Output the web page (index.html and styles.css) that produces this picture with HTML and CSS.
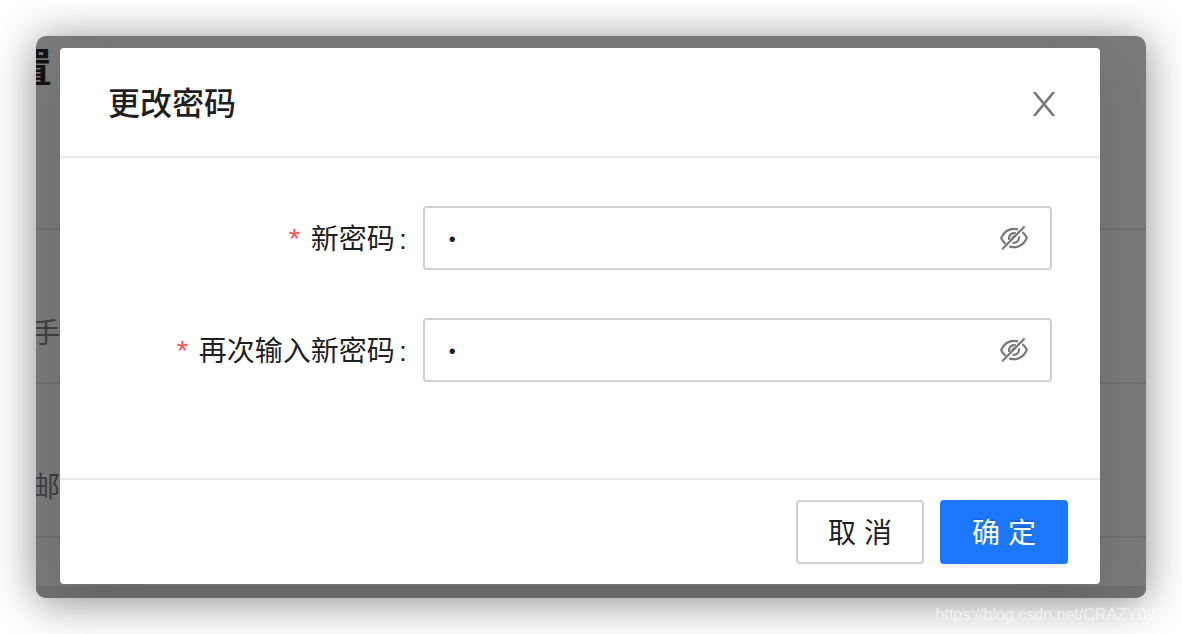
FILE: index.html
```
<!DOCTYPE html>
<html lang="zh-CN">
  <head>
    <meta charset="utf-8">
    <title>更改密码</title>
    <link rel="stylesheet" href="styles.css">
  </head>
  <body>
    <div class="window">
      <!-- Settings page behind the mask -->
      <div class="page">
        <div class="page-title">置</div>
        <div class="page-row">手</div>
        <div class="page-row">邮</div>
        <div class="page-rest"></div>
        <div class="page-footer"></div>
      </div>

      <form class="modal" role="dialog" aria-labelledby="modalTitle">
        <div class="modal-header">
          <h2 id="modalTitle" class="modal-title">更改密码</h2>
          <button type="button" class="close" aria-label="关闭">
            <svg width="24" height="24" viewBox="0 0 24 24" fill="currentColor">
              <path d="M0.5 0H3.8L12 9.8L20.2 0H23.5L13.7 12L23.5 24H20.2L12 14.2L3.8 24H0.5L10.3 12Z"/>
            </svg>
          </button>
        </div>

        <div class="modal-body">
          <div class="form-item">
            <label class="form-label" for="password">新密码</label>
            <div class="input-box">
              <input type="password" id="password" value="1" required>
              <button type="button" class="eye" aria-label="显示密码">
                <svg width="28" height="28" viewBox="0 0 28 28" fill="none" stroke="currentColor" stroke-width="2.2">
                  <path d="M18.2 5.5C16.9 5.1 15.5 4.8 14 4.8C8.5 4.8 4.1 7.9 1.4 13.4Q1.1 14 1.4 14.6C2.5 16.8 3.9 18.6 5.6 20"/>
                  <path d="M22.4 8C24.1 9.4 25.5 11.2 26.6 13.4Q26.9 14 26.6 14.6C23.9 20.1 19.5 23.2 14 23.2C12.3 23.2 10.7 22.9 9.3 22.4"/>
                  <path d="M15.8 9.3C12 8.2 8.7 11 9.1 14.8L9.4 16"/>
                  <path d="M18.7 12.4C19.8 16 16.5 19.7 12.5 18.7"/>
                  <path d="M14.4 12.7A1.7 1.7 0 0 0 12.7 14.4"/>
                  <path d="M2.2 25.3L24.6 2.4"/>
                </svg>
              </button>
            </div>
          </div>
          <div class="form-item">
            <label class="form-label" for="confirm">再次输入新密码</label>
            <div class="input-box">
              <input type="password" id="confirm" value="1" required>
              <button type="button" class="eye" aria-label="显示密码">
                <svg width="28" height="28" viewBox="0 0 28 28" fill="none" stroke="currentColor" stroke-width="2.2">
                  <path d="M18.2 5.5C16.9 5.1 15.5 4.8 14 4.8C8.5 4.8 4.1 7.9 1.4 13.4Q1.1 14 1.4 14.6C2.5 16.8 3.9 18.6 5.6 20"/>
                  <path d="M22.4 8C24.1 9.4 25.5 11.2 26.6 13.4Q26.9 14 26.6 14.6C23.9 20.1 19.5 23.2 14 23.2C12.3 23.2 10.7 22.9 9.3 22.4"/>
                  <path d="M15.8 9.3C12 8.2 8.7 11 9.1 14.8L9.4 16"/>
                  <path d="M18.7 12.4C19.8 16 16.5 19.7 12.5 18.7"/>
                  <path d="M14.4 12.7A1.7 1.7 0 0 0 12.7 14.4"/>
                  <path d="M2.2 25.3L24.6 2.4"/>
                </svg>
              </button>
            </div>
          </div>
        </div>

        <div class="modal-footer">
          <button type="button" class="btn">取 消</button>
          <button type="submit" class="btn btn-primary">确 定</button>
        </div>
      </form>
    </div>

    <div class="watermark">https://blog.csdn.net/CRAZY0925</div>
  </body>
</html>
```

FILE: styles.css
```
* {
  box-sizing: border-box;
}

body {
  margin: 0;
  padding: 36px;
  background: #ffffff;
  color: #1f1f1f;
  font-family: "Liberation Sans", "Noto Sans CJK SC", sans-serif;
  font-size: 28px;
  line-height: 44px;
}

button,
input {
  font-family: inherit;
  font-size: inherit;
  line-height: inherit;
  color: inherit;
}

/* The page and the modal share one grid cell */
.window {
  display: grid;
  border-radius: 10px;
  box-shadow: 0 4px 44px rgba(0, 0, 0, 0.46);
  overflow: hidden;
}

.page,
.modal {
  grid-area: 1 / 1;
}

.page {
  display: flex;
  flex-direction: column;
  background: #7a7a7a;
  color: #404040;
}

.page-title {
  height: 194px;
  padding-top: 10px;
  margin-left: -24px;
  border-bottom: 2px solid #707070;
  color: #141414;
  font-size: 40px;
  font-weight: bold;
}

.page-row {
  height: 154px;
  padding-top: 82px;
  margin-left: -4px;
  border-bottom: 2px solid #707070;
}

.page-rest {
  flex: 1;
}

.page-footer {
  height: 12px;
  background: #6f7072;
}

.modal {
  margin: 12px 46px 14px 24px;
  background: #ffffff;
  border-radius: 4px;
  box-shadow: 0 12px 32px -16px rgba(0, 0, 0, 0.08),
    0 18px 56px rgba(0, 0, 0, 0.05),
    0 24px 96px 32px rgba(0, 0, 0, 0.03);
}

.modal-header {
  display: flex;
  align-items: center;
  justify-content: space-between;
  padding: 34px 44px 30px 48px;
  border-bottom: 2px solid #ebebeb;
}

.modal-title {
  margin: 0;
  font-size: 32px;
  font-weight: 500;
}

.close,
.eye {
  display: flex;
  padding: 0;
  border: none;
  background: none;
  color: #7a7a7a;
  cursor: pointer;
}

.modal-body {
  padding: 48px;
}

.form-item {
  display: grid;
  grid-template-columns: 1fr 2fr;
  align-items: center;
  margin-bottom: 48px;
}

.form-label {
  padding-top: 6px;
  text-align: right;
}

.form-label::before {
  content: "*";
  margin-right: 8px;
  color: #ff4d4f;
  font-family: "Liberation Mono", monospace;
}

.form-label::after {
  content: ":";
  margin: 0 16px 0 4px;
}

.input-box {
  display: flex;
  align-items: center;
  height: 64px;
  padding: 0 22px 0 24px;
  border: 2px solid #d0d0d0;
  border-radius: 4px;
}

.input-box input {
  flex: 1;
  min-width: 0;
  padding: 2px 0 0;
  border: none;
  outline: none;
  background: none;
  font-size: 20px;
}

.modal-footer {
  display: flex;
  justify-content: flex-end;
  gap: 16px;
  padding: 20px 32px;
  border-top: 2px solid #ebebeb;
}

.btn {
  width: 128px;
  height: 64px;
  padding: 4px 0 0;
  border: 2px solid #d0d0d0;
  border-radius: 4px;
  background: #ffffff;
  box-shadow: 0 4px 0 rgba(0, 0, 0, 0.02);
  cursor: pointer;
}

.btn-primary {
  border-color: #1b78ff;
  background: #1b78ff;
  color: #ffffff;
  text-shadow: 0 -2px 0 rgba(0, 0, 0, 0.12);
  box-shadow: 0 4px 0 rgba(0, 0, 0, 0.05);
}

.watermark {
  position: absolute;
  right: 9px;
  bottom: 8px;
  color: rgba(255, 255, 255, 0.6);
  font-size: 16px;
  line-height: 22px;
}
```
